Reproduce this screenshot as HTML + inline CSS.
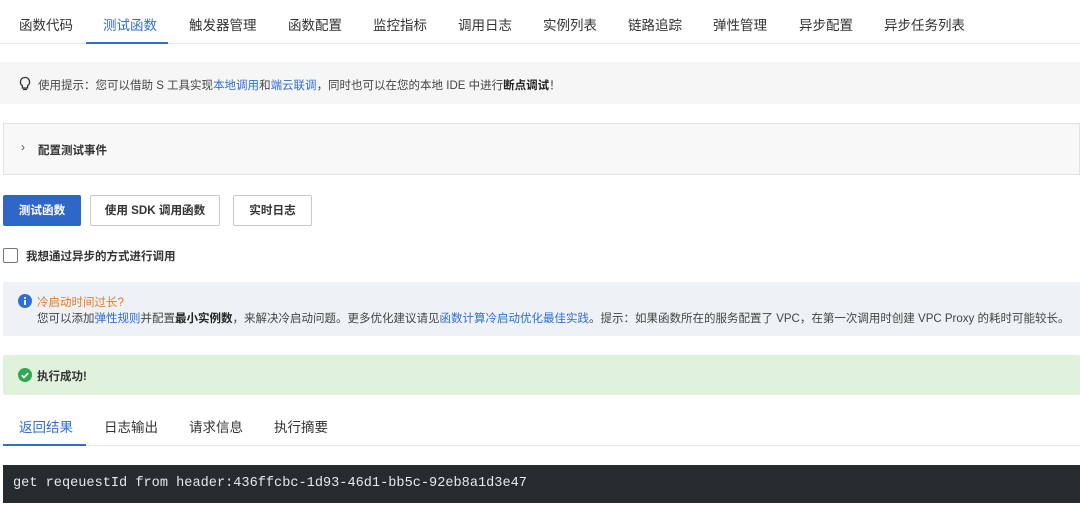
<!DOCTYPE html>
<html><head><meta charset="utf-8"><style>
*{margin:0;padding:0;box-sizing:border-box}
body{width:1080px;height:510px;background:#fff;font-family:"Liberation Sans","Noto Sans CJK SC",sans-serif;color:#333;position:relative;overflow:hidden}
.a{position:absolute;white-space:nowrap}
.tabs span{position:absolute;top:14px;font-size:13.5px;color:#333}
a{color:#2f6fd3;text-decoration:none}
.btn{position:absolute;top:195px;height:31px;border:1px solid #c8c8c8;border-radius:2px;font-size:11.6px;line-height:29px;text-align:center;color:#333;font-weight:bold;background:#fff}
</style></head><body>
<div class="tabs">
<span style="left:19px">函数代码</span>
<span style="left:103px;color:#2f6fd3">测试函数</span>
<span style="left:189px">触发器管理</span>
<span style="left:288px">函数配置</span>
<span style="left:373px">监控指标</span>
<span style="left:458px">调用日志</span>
<span style="left:543px">实例列表</span>
<span style="left:628px">链路追踪</span>
<span style="left:713px">弹性管理</span>
<span style="left:799px">异步配置</span>
<span style="left:884px">异步任务列表</span>
</div>
<div class="a" style="left:0;top:43px;width:1080px;height:1px;background:#e8e8e8"></div>
<div class="a" style="left:86px;top:42px;width:82px;height:2px;background:#2f6fd3"></div>

<div class="a" style="left:0;top:62px;width:1080px;height:42px;background:#f6f6f6"></div>
<svg class="a" style="left:19px;top:76px" width="12" height="16" viewBox="0 0 12 16"><path d="M6 1.5a4.5 4.5 0 0 0-2.6 8.2V12h5.2V9.7A4.5 4.5 0 0 0 6 1.5zM4 13.5h4" fill="none" stroke="#333" stroke-width="1.3"/></svg>
<div class="a" style="left:38px;top:77px;font-size:11.5px;color:#444">使用提示：您可以借助 S 工具实现<a>本地调用</a>和<a>端云联调</a>，同时也可以在您的本地 IDE 中进行<b style="color:#222">断点调试</b>！</div>

<div class="a" style="left:3px;top:123px;width:1077px;height:52px;background:#f8f8f8;border:1px solid #e3e3e3"></div>
<div class="a" style="left:21px;top:140px;font-size:12px;color:#555">›</div>
<div class="a" style="left:38px;top:142px;font-size:11.5px;font-weight:bold;color:#333">配置测试事件</div>

<div class="btn" style="left:3px;width:78px;background:#2f67c8;border-color:#2f67c8;color:#fff">测试函数</div>
<div class="btn" style="left:90px;width:130px">使用 SDK 调用函数</div>
<div class="btn" style="left:233px;width:79px">实时日志</div>

<div class="a" style="left:3px;top:248px;width:15px;height:15px;border:1px solid #777;border-radius:2px;background:#fff"></div>
<div class="a" style="left:26px;top:248px;font-size:11.5px;font-weight:bold;color:#333">我想通过异步的方式进行调用</div>

<div class="a" style="left:3px;top:282px;width:1077px;height:54px;background:#eef1f5"></div>
<svg class="a" style="left:18px;top:294px" width="14" height="14" viewBox="0 0 14 14"><circle cx="7" cy="7" r="7" fill="#2f6fd3"/><rect x="6.1" y="6" width="1.8" height="5" fill="#fff"/><circle cx="7" cy="4" r="1" fill="#fff"/></svg>
<div class="a" style="left:37px;top:294px;font-size:11.5px;color:#e07b2e">冷启动时间过长?</div>
<div class="a" style="left:37px;top:310px;font-size:11.5px;color:#444">您可以添加<a>弹性规则</a>并配置<b style="color:#222">最小实例数</b>，来解决冷启动问题。更多优化建议请见<a>函数计算冷启动优化最佳实践</a>。提示：如果函数所在的服务配置了 VPC，在第一次调用时创建 VPC Proxy 的耗时可能较长。</div>

<div class="a" style="left:3px;top:355px;width:1077px;height:40px;background:#e0f2dc;border-radius:2px"></div>
<svg class="a" style="left:18px;top:368px" width="14" height="14" viewBox="0 0 14 14"><circle cx="7" cy="7" r="7" fill="#2fa84f"/><path d="M3.8 7.2l2.2 2.2 4.2-4.3" fill="none" stroke="#fff" stroke-width="1.8"/></svg>
<div class="a" style="left:37px;top:368px;font-size:11.5px;font-weight:bold;color:#333">执行成功!</div>

<div class="tabs">
<span style="left:19px;top:416px;color:#2f6fd3">返回结果</span>
<span style="left:104px;top:416px">日志输出</span>
<span style="left:189px;top:416px">请求信息</span>
<span style="left:274px;top:416px">执行摘要</span>
</div>
<div class="a" style="left:3px;top:445px;width:1077px;height:1px;background:#e8e8e8"></div>
<div class="a" style="left:3px;top:444px;width:83px;height:2px;background:#2f6fd3"></div>

<div class="a" style="left:3px;top:465px;width:1077px;height:38px;background:#262b2f"></div>
<div class="a" style="left:13px;top:476px;font-family:'Liberation Mono','DejaVu Sans Mono',monospace;font-size:13.6px;color:#e8e8e8">get reqeuestId from header:436ffcbc-1d93-46d1-bb5c-92eb8a1d3e47</div>
</body></html>
